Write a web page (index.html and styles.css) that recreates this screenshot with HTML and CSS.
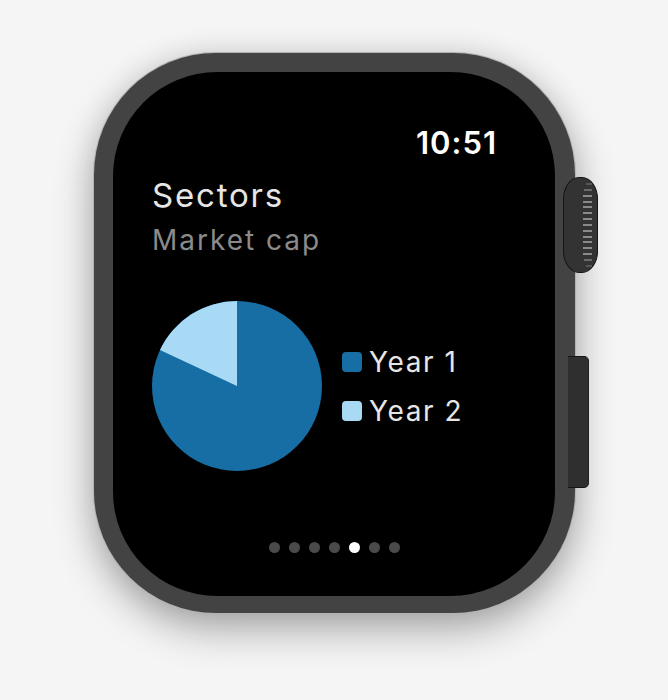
FILE: index.html
```html
<!DOCTYPE html>
<html>
<head>
<meta charset="utf-8">
<link rel="stylesheet" href="styles.css">
</head>
<body>
<div class="stage">
  <div class="watch">
    <div class="case">
      <div class="screen">
        <div class="time">10:51</div>
        <div class="title">Sectors</div>
        <div class="subtitle">Market cap</div>
        <div class="chart">
          <svg class="pie" width="170" height="170" viewBox="0 0 170 170">
            <circle cx="85" cy="85" r="85" fill="#176ea4"/>
            <path d="M85 85 L85 0 A85 85 0 0 0 7.96 49.08 Z" fill="#a8daf6"/>
          </svg>
          <div class="legend">
            <div class="item"><span class="swatch dark"></span><span>Year 1</span></div>
            <div class="item"><span class="swatch light"></span><span>Year 2</span></div>
          </div>
        </div>
        <div class="dots">
          <span class="dot"></span><span class="dot"></span><span class="dot"></span><span class="dot"></span><span class="dot active"></span><span class="dot"></span><span class="dot"></span>
        </div>
      </div>
    </div>
    <div class="crown">
      <div class="ridges">
        <i></i><i></i><i></i><i></i><i></i><i></i><i></i><i></i><i></i><i></i><i></i><i></i><i></i><i></i><i></i>
      </div>
    </div>
    <div class="button"></div>
  </div>
</div>
</body>
</html>
```

FILE: styles.css
```css
html, body {
  margin: 0;
  padding: 0;
  background: #f5f5f5;
  width: 668px;
  height: 700px;
  overflow: hidden;
}
.stage {
  padding: 53px 0 0 94px;
}
.watch {
  position: relative;
  width: 481px;
  height: 560px;
}
.case {
  width: 481px;
  height: 560px;
  box-sizing: border-box;
  padding: 19px 20px 17px 19px;
  background: #434343;
  border-radius: 122px;
  box-shadow: 0 0 0 1px #b3b3b3, 0 16px 40px rgba(0,0,0,0.32), 0 0 30px rgba(0,0,0,0.08);
  position: relative;
  z-index: 1;
}
.screen {
  width: 100%;
  height: 100%;
  background: #000;
  border-radius: 104px;
  box-sizing: border-box;
  padding: 55px 58px 43px 39px;
  display: flex;
  flex-direction: column;
  font-family: Inter, "Noto Sans", sans-serif;
  color: #e8e8e8;
}
.time {
  align-self: flex-end;
  font-size: 31px;
  line-height: 31px;
  font-weight: 600;
  color: #fff;
  letter-spacing: 1px;
}
.title {
  margin-top: 21px;
  font-size: 33px;
  line-height: 33px;
  color: #e6e6e6;
  letter-spacing: 1.8px;
}
.subtitle {
  margin-top: 14px;
  font-size: 28px;
  line-height: 28px;
  color: #8b8b8b;
  letter-spacing: 2px;
}
.chart {
  margin-top: 47px;
  display: flex;
  align-items: center;
  gap: 20px;
}
.pie {
  display: block;
  flex: none;
}
.legend {
  display: flex;
  flex-direction: column;
  gap: 21px;
}
.item {
  display: flex;
  align-items: center;
  gap: 7px;
  font-size: 28px;
  line-height: 28px;
  color: #e6e6e6;
  letter-spacing: 1.6px;
}
.swatch {
  width: 20px;
  height: 20px;
  border-radius: 4px;
  flex: none;
}
.swatch.dark { background: #176ea4; }
.swatch.light { background: #a8daf6; }
.dots {
  margin-top: auto;
  align-self: center;
  margin-left: 20px;
  display: flex;
  gap: 9px;
}
.dot {
  width: 11px;
  height: 11px;
  border-radius: 50%;
  background: #4a4a4a;
}
.dot.active { background: #fff; }
.crown {
  position: absolute;
  left: 469px;
  top: 124px;
  width: 35px;
  height: 96px;
  box-sizing: border-box;
  background: #333;
  border: 1.5px solid #161616;
  border-radius: 16px / 22px;
  z-index: 2;
  display: flex;
  justify-content: flex-end;
  padding-right: 5px;
}
.ridges {
  display: flex;
  flex-direction: column;
  justify-content: space-between;
  align-items: flex-end;
  padding: 5px 0;
}
.ridges i {
  display: block;
  width: 9px;
  height: 2px;
  background: #8a8a8a;
}
.ridges i:first-child, .ridges i:last-child { width: 6px; background: #555; }
.ridges i:nth-child(2), .ridges i:nth-last-child(2) { width: 8px; background: #6a6a6a; }
.button {
  position: absolute;
  left: 474px;
  top: 303px;
  width: 21px;
  height: 132px;
  box-sizing: border-box;
  background: #2f2f2f;
  border-top: 1.5px solid #151515;
  border-bottom: 1.5px solid #151515;
  border-right: 1px solid #222;
  border-radius: 0 5px 5px 0;
  z-index: 2;
}
```
